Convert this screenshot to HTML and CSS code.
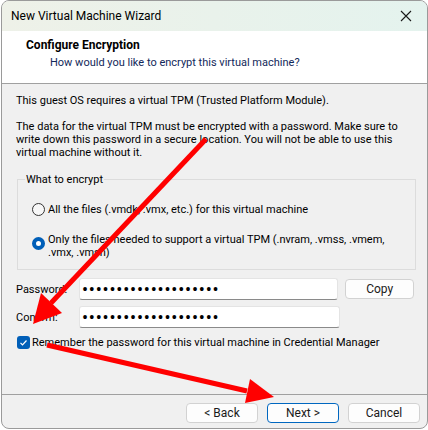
FILE: index.html
```html
<!DOCTYPE html>
<html lang="en">
<head>
  <meta charset="UTF-8">
  <title>New Virtual Machine Wizard</title>
  <link rel="stylesheet" href="styles.css">
</head>
<body>
  <div class="window">
    <div class="titlebar">
      <span class="title">New Virtual Machine Wizard</span>
      <button class="close" title="Close">
        <svg width="12" height="12" viewBox="0 0 12 12"><path d="M1 1L11 11M11 1L1 11" stroke="#1a1a1a" stroke-width="1.1" fill="none"/></svg>
      </button>
    </div>

    <div class="header">
      <div class="header-title">Configure Encryption</div>
      <div class="header-sub">How would you like to encrypt this virtual machine?</div>
    </div>

    <div class="content">
      <p class="intro">This guest OS requires a virtual TPM (Trusted Platform Module).</p>
      <p class="note">The data for the virtual TPM must be encrypted with a password. Make sure to<br>write down this password in a secure location. You will not be able to use this<br>virtual machine without it.</p>

      <fieldset class="group">
        <legend>What to encrypt</legend>
        <label class="option">
          <input type="radio" name="scope">
          <span>All the files (.vmdk, .vmx, etc.) for this virtual machine</span>
        </label>
        <label class="option">
          <input type="radio" name="scope" checked>
          <span>Only the files needed to support a virtual TPM (.nvram, .vmss, .vmem,<br>.vmx, .vmsn)</span>
        </label>
      </fieldset>

      <div class="field">
        <label class="field-label">Password:</label>
        <input type="password" class="pw" value="xxxxxxxxxxxxxxxxxxxx">
        <button class="btn copy">Copy</button>
      </div>
      <div class="field">
        <label class="field-label">Confirm:</label>
        <input type="password" class="pw" value="xxxxxxxxxxxxxxxxxxxx">
      </div>

      <label class="remember">
        <input type="checkbox" checked>
        <span>Remember the password for this virtual machine in Credential Manager</span>
      </label>
    </div>

    <div class="footer">
      <button class="btn">&lt; Back</button>
      <button class="btn primary">Next &gt;</button>
      <button class="btn">Cancel</button>
    </div>
  </div>

  <!-- red callout arrows drawn on top of the dialog -->
  <svg class="arrows" width="428" height="430" viewBox="0 0 428 430">
    <g fill="#ff0000" stroke="#ff0000">
      <line x1="206" y1="139" x2="51" y2="303" stroke-width="5"/>
      <polygon points="33,324 41,293 62,313" stroke="none"/>
      <line x1="47" y1="345" x2="247" y2="391" stroke-width="5"/>
      <polygon points="274,397 250,379 245,403" stroke="none"/>
    </g>
  </svg>
</body>
</html>
```

FILE: styles.css
```css
body {
  margin: 0;
  background: #fff;
  font-family: Roboto, "Liberation Sans", sans-serif;
  font-size: 11px;
  color: #000;
}

.window {
  width: 425px;
  height: 427px;
  margin-left: 1px;
  border: 1px solid #9a9a9a;
  border-radius: 8px;
  overflow: hidden;
  background: #f0f0f0;
}

.titlebar {
  height: 30px;
  display: flex;
  align-items: center;
  justify-content: space-between;
  padding-left: 9px;
  background: linear-gradient(to right, #eef1e8, #e4f3ee);
  font-size: 12px;
}

.close {
  width: 46px;
  height: 30px;
  border: none;
  background: none;
  display: flex;
  align-items: center;
  justify-content: center;
  margin-right: -2px;
}

.header {
  height: 53px;
  background: #fff;
  border-bottom: 1px solid #a0a0a0;
  padding: 7px 0 0 24px;
  box-sizing: border-box;
}

.header-title {
  font-weight: bold;
  font-size: 12px;
  line-height: 15px;
}

.header-sub {
  padding-left: 24px;
  margin-top: 2px;
  color: #12285a;
  line-height: 15px;
}

.content {
  height: 310px;
  box-sizing: border-box;
  padding: 10px 13px 0 14px;
}

.content p {
  margin: 0;
  line-height: 13px;
}

.content .note {
  margin-top: 13px;
}

.group {
  margin: 14px 0 0 1px;
  padding: 0 0 10px 14px;
  border: 1px solid #dcdcdc;
  width: 399px;
  box-sizing: border-box;
}

.group legend {
  padding: 0 1px;
  margin-left: -7px;
  line-height: 13px;
}

.option {
  display: flex;
  align-items: flex-start;
  gap: 3px;
  line-height: 13px;
  margin-top: 17px;
}

.option + .option {
  margin-top: 17px;
}

.option input {
  appearance: none;
  width: 13px;
  height: 13px;
  margin: 0;
  flex: none;
  border: 1px solid #333;
  border-radius: 50%;
  background: #f7f7f7;
  box-sizing: border-box;
}

.option input:checked {
  margin-top: 4px;
  border: 4px solid #005fb8;
  background: #fff;
}

.field {
  display: flex;
  align-items: center;
  height: 22px;
  margin-top: 8px;
}

.field + .field {
  margin-top: 6px;
}

.field-label {
  width: 63px;
  flex: none;
}

.pw {
  width: 261px;
  height: 22px;
  box-sizing: border-box;
  border: 1px solid #e4e4e4;
  border-bottom-color: #8a8a8a;
  border-radius: 3px;
  background: #fff;
  padding: 0 2px;
  font-family: Roboto, sans-serif;
  font-size: 18px;
  letter-spacing: 0.8px;
  outline: none;
}

.btn {
  font-family: inherit;
  font-size: 12px;
  height: 20px;
  border: 1px solid #d2d2d2;
  border-radius: 4px;
  background: #fdfdfd;
  color: #1a1a1a;
  padding: 0;
}

.copy {
  width: 69px;
  margin-left: 7px;
}

.remember {
  display: flex;
  align-items: center;
  gap: 2px;
  margin-top: 8px;
  line-height: 13px;
}

.remember input {
  appearance: none;
  width: 13px;
  height: 13px;
  margin: 0 0 0 1px;
  border-radius: 3px;
  background: #005fb8 url("data:image/svg+xml,%3Csvg xmlns='http://www.w3.org/2000/svg' width='13' height='13'%3E%3Cpath d='M3.5 6.8l2 2 4-4.3' stroke='white' stroke-width='1.2' fill='none'/%3E%3C/svg%3E") no-repeat center;
}

.footer {
  height: 33px;
  border-top: 1px solid #a0a0a0;
  display: flex;
  justify-content: flex-end;
  align-items: flex-start;
  gap: 9px;
  padding: 8px 7px 0 0;
}

.footer .btn {
  width: 72px;
}

.footer .primary {
  border-color: #0067c0;
}

.arrows {
  position: absolute;
  left: 0;
  top: 0;
  pointer-events: none;
}
```
